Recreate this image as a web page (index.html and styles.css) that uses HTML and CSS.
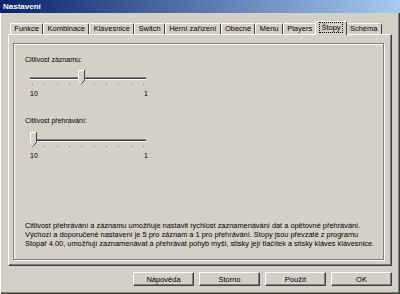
FILE: index.html
```html
<!DOCTYPE html>
<html lang="cs">
<head>
    <meta charset="UTF-8">
    <meta name="viewport" content="width=device-width, initial-scale=1.0">
    <title>Nastavení</title>
    <link rel="stylesheet" href="styles.css">
</head>
<body>
    <div class="window">
        <div class="titlebar">Nastavení</div>
        <div class="content">
            <div class="tabs">
                <div class="tab">Funkce</div>
                <div class="tab">Kombinace</div>
                <div class="tab">Klávesnice</div>
                <div class="tab">Switch</div>
                <div class="tab">Herní zařízení</div>
                <div class="tab">Obecné</div>
                <div class="tab">Menu</div>
                <div class="tab">Players</div>
                <div class="tab active"><span class="focus">Štopy</span></div>
                <div class="tab">Schéma</div>
            </div>
            <div class="panel">
                <div class="group">
                    <div class="setting">
                        <div class="label">Citlivost záznamu:</div>
                        <svg class="slider" width="116" height="17" viewBox="0 0 116 17">
                            <rect x="0" y="8" width="116" height="1" fill="#808080"/>
                            <rect x="0" y="9" width="116" height="1" fill="#404040"/>
                            <rect x="0" y="10" width="116" height="1" fill="#fff"/>
                            <g fill="#808080">
                                <rect x="2" y="15" width="1" height="1"/>
                                <rect x="14" y="15" width="1" height="1"/>
                                <rect x="27" y="15" width="1" height="1"/>
                                <rect x="39" y="15" width="1" height="1"/>
                                <rect x="51" y="15" width="1" height="1"/>
                                <rect x="64" y="15" width="1" height="1"/>
                                <rect x="76" y="15" width="1" height="1"/>
                                <rect x="88" y="15" width="1" height="1"/>
                                <rect x="101" y="15" width="1" height="1"/>
                                <rect x="113" y="15" width="1" height="1"/>
                            </g>
                            <g transform="translate(48 1)">
                                <path d="M0 0H7V10L3.5 14L0 10Z" fill="#d4d0c8"/>
                                <path d="M0.5 10V0.5H6.5" fill="none" stroke="#fff"/>
                                <path d="M0.5 10.5L3.5 13.8" fill="none" stroke="#fff"/>
                                <path d="M6.5 0V10.3L3.5 13.8" fill="none" stroke="#404040"/>
                            </g>
                        </svg>
                        <div class="scale"><span>10</span><span>1</span></div>
                    </div>
                    <div class="setting">
                        <div class="label">Citlivost přehrávání:</div>
                        <svg class="slider" width="116" height="17" viewBox="0 0 116 17">
                            <rect x="0" y="8" width="116" height="1" fill="#808080"/>
                            <rect x="0" y="9" width="116" height="1" fill="#404040"/>
                            <rect x="0" y="10" width="116" height="1" fill="#fff"/>
                            <g fill="#808080">
                                <rect x="2" y="15" width="1" height="1"/>
                                <rect x="14" y="15" width="1" height="1"/>
                                <rect x="27" y="15" width="1" height="1"/>
                                <rect x="39" y="15" width="1" height="1"/>
                                <rect x="51" y="15" width="1" height="1"/>
                                <rect x="64" y="15" width="1" height="1"/>
                                <rect x="76" y="15" width="1" height="1"/>
                                <rect x="88" y="15" width="1" height="1"/>
                                <rect x="101" y="15" width="1" height="1"/>
                                <rect x="113" y="15" width="1" height="1"/>
                            </g>
                            <g transform="translate(0 1)">
                                <path d="M0 0H7V10L3.5 14L0 10Z" fill="#d4d0c8"/>
                                <path d="M0.5 10V0.5H6.5" fill="none" stroke="#fff"/>
                                <path d="M0.5 10.5L3.5 13.8" fill="none" stroke="#fff"/>
                                <path d="M6.5 0V10.3L3.5 13.8" fill="none" stroke="#404040"/>
                            </g>
                        </svg>
                        <div class="scale"><span>10</span><span>1</span></div>
                    </div>
                    <p class="note">
                        Citlivost přehrávání a záznamu umožňuje nastavit rychlost zaznamenávání dat a opětovné přehrávání.<br>
                        Výchozí a doporučené nastavení je 5 pro záznam a 1 pro přehrávání. Stopy jsou převzaté z programu<br>
                        Stopař 4.00, umožňují zaznamenávat a přehrávat pohyb myši, stisky její tlačítek a stisky kláves klávesnice.
                    </p>
                </div>
            </div>
            <div class="buttons">
                <button class="btn">Nápověda</button>
                <button class="btn">Storno</button>
                <button class="btn">Použít</button>
                <button class="btn">OK</button>
            </div>
        </div>
    </div>
</body>
</html>
```

FILE: styles.css
```css
* {
    margin: 0;
    padding: 0;
    box-sizing: border-box;
}

body {
    background-color: #d4d0c8;
    font-family: "Liberation Sans", Arial, sans-serif;
    font-size: 7px;
    color: #000;
}

.window {
    width: 400px;
    height: 294px;
    background-color: #d4d0c8;
    box-shadow: inset 1px 0 #fff, inset -1px -1px #404040, inset -2px -2px #808080;
}

.titlebar {
    height: 13px;
    padding-left: 3px;
    line-height: 13px;
    font-size: 8px;
    font-weight: bold;
    color: #fff;
    background: linear-gradient(to right, #0a246a, #a6caf0);
}

.content {
    padding: 8px 8px 0 8px;
}

.tabs {
    display: flex;
    align-items: flex-end;
    height: 13px;
    padding-left: 2px;
    font-size: 7.5px;
}

.tab {
    height: 11px;
    padding: 0 3.3px;
    line-height: 10px;
    border-top: 1px solid #fff;
    border-left: 1px solid #fff;
    border-right: 1px solid #404040;
    border-top-left-radius: 2px;
    border-top-right-radius: 2px;
    white-space: nowrap;
}

.tab.active {
    position: relative;
    z-index: 1;
    height: 14px;
    margin: 0 -1px -1px;
    padding: 1px 4px 0;
    background-color: #d4d0c8;
}

.focus {
    display: inline-block;
    padding: 0 1px;
    line-height: 9px;
    outline: 1px dotted #000;
}

.panel {
    height: 232px;
    padding: 8px 7px 5px 4px;
    border: 1px solid;
    border-color: #fff #404040 #404040 #fff;
    box-shadow: inset -1px -1px #808080;
}

.group {
    display: flex;
    flex-direction: column;
    height: 100%;
    padding: 11px 0 11px 11px;
    border: 1px solid #808080;
    box-shadow: inset 1px 1px #fff, 1px 1px #fff;
}

.label {
    line-height: 10px;
}

.slider {
    display: block;
    margin: 4px 0 0 5px;
}

.scale {
    display: flex;
    justify-content: space-between;
    width: 118px;
    margin: 3px 0 0 5px;
    line-height: 10px;
}

.setting + .setting {
    margin-top: 17px;
}

.setting + .setting .slider {
    margin-top: 5px;
}

.note {
    margin-top: auto;
    font-size: 7.4px;
    line-height: 9px;
    white-space: nowrap;
}

.buttons {
    display: flex;
    justify-content: flex-end;
    gap: 5px;
    margin-top: 6px;
}

.btn {
    width: 61px;
    height: 14px;
    font-family: "Liberation Sans", Arial, sans-serif;
    font-size: 7.5px;
    background-color: #d4d0c8;
    border: 1px solid;
    border-color: #fff #404040 #404040 #fff;
    box-shadow: inset -1px -1px #808080;
}
```
